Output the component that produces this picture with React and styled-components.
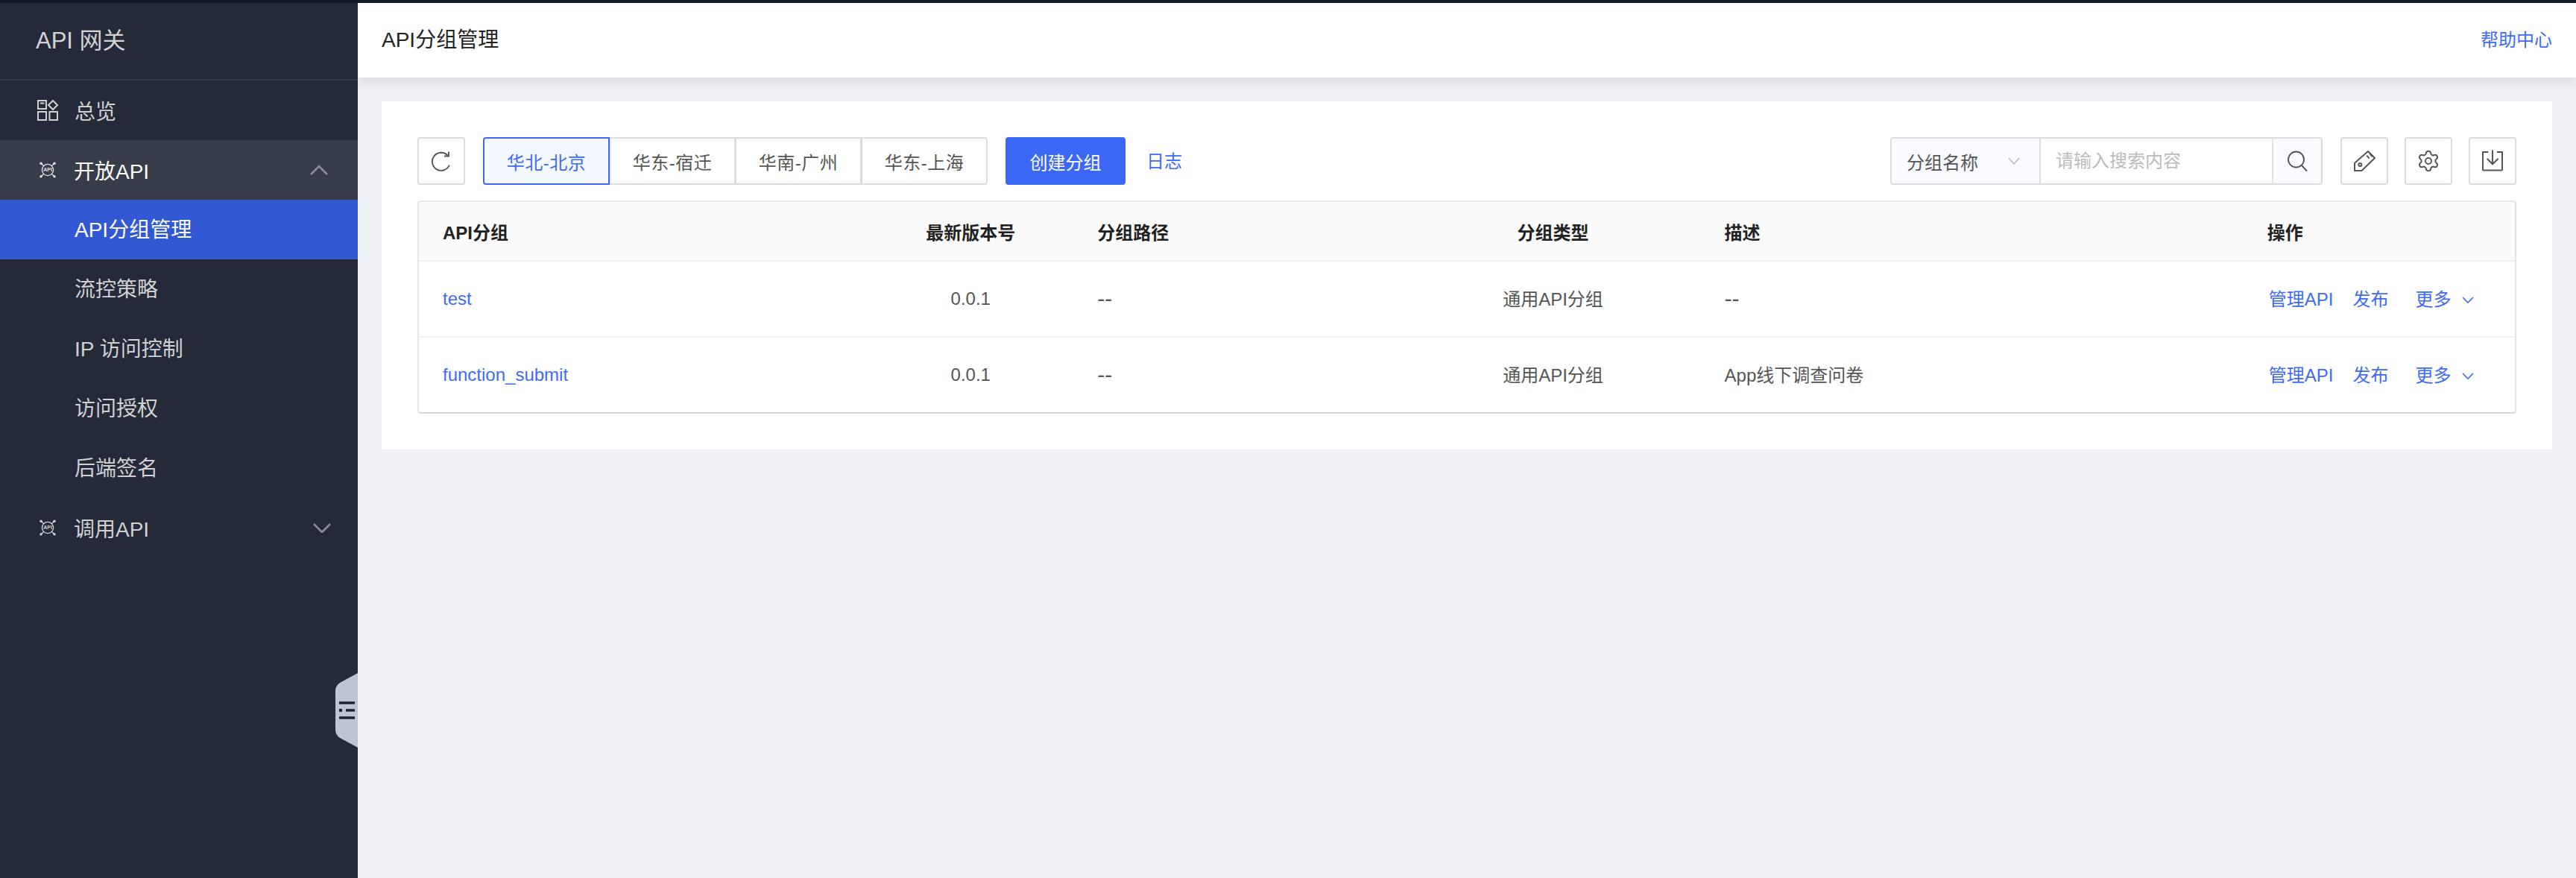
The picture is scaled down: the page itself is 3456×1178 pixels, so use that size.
import React from "react";
import styled, { createGlobalStyle } from "styled-components";
import { Settings } from "lucide-react";

const Global = createGlobalStyle`
  html, body { margin: 0; padding: 0; background: #eff0f4; }
  body { font-family: "Liberation Sans", "Noto Sans CJK SC", sans-serif; }
  * { box-sizing: border-box; }
`;

const Page = styled.div`
  width: 3456px;
  height: 1178px;
  display: flex;
  flex-direction: column;
  overflow: hidden;
`;
const TopStrip = styled.div`
  height: 4px;
  flex: none;
  background: #141b2b;
`;
const Body = styled.div`
  flex: 1;
  display: flex;
  min-height: 0;
`;
const Sidebar = styled.aside`
  width: 480px;
  flex: none;
  position: relative;
  background: #242a38;
`;
const Brand = styled.div`
  height: 104px;
  padding: 0 0 8px 48px;
  display: flex;
  align-items: center;
  font-size: 31px;
  color: #d3d4d7;
  border-bottom: 2px solid #363b48;
`;
const NavItem = styled.div`
  height: 80px;
  display: flex;
  align-items: center;
  padding-left: ${(p) => (p.$sub ? "100px" : "50px")};
  padding-bottom: ${(p) => (p.$sub ? "4px" : "0")};
  font-size: 28px;
  color: ${(p) => (p.$active || p.$open ? "#ffffff" : "#d0d1d5")};
  background: ${(p) => (p.$active ? "#3358d4" : p.$open ? "#373c49" : "transparent")};
`;
const NavIconSlot = styled.span`
  width: 50px;
  flex: none;
  display: flex;
  align-items: center;
`;
const NavLabel = styled.span`
  flex: 1;
  margin-left: ${(p) => p.$shift || 0}px;
`;
const NavChevron = styled.svg`
  width: 24px;
  height: 14px;
  margin-right: ${(p) => p.$inset}px;
  fill: none;
  stroke: #8b8e98;
  stroke-width: 2.6;
`;
const Handle = styled.div`
  position: absolute;
  right: 0;
  top: 899px;
  width: 30px;
  height: 100px;
`;
const Main = styled.main`
  flex: 1;
  min-width: 0;
  display: flex;
  flex-direction: column;
`;
const Header = styled.header`
  height: 100px;
  flex: none;
  display: flex;
  align-items: center;
  justify-content: space-between;
  padding: 0 32px 6px;
  background: #fff;
  box-shadow: 0 4px 16px rgba(0, 0, 0, 0.1);
`;
const Title = styled.div`
  font-size: 28px;
  color: #222;
`;
const HelpLink = styled.a`
  font-size: 24px;
  color: #3d6bf5;
`;
const Content = styled.div`
  padding: 32px;
`;
const Card = styled.section`
  background: #fff;
  padding: 48px;
`;
const Toolbar = styled.div`
  display: flex;
  align-items: center;
  height: 64px;
  margin-bottom: 21px;
`;
const IconButton = styled.button`
  width: 64px;
  height: 64px;
  padding: 0;
  margin-left: ${(p) => p.$gap || 0}px;
  display: flex;
  align-items: center;
  justify-content: center;
  background: #fff;
  border: 2px solid #dcdcdc;
  border-radius: 4px;
  color: #555;
`;
const Regions = styled.div`
  display: flex;
  margin-left: 24px;
`;
const RegionTab = styled.button`
  width: 170px;
  height: 64px;
  margin-left: ${(p) => (p.$first ? 0 : "-1px")};
  padding: 0;
  position: ${(p) => (p.$active ? "relative" : "static")};
  font: inherit;
  font-size: 24px;
  letter-spacing: 0.5px;
  color: ${(p) => (p.$active ? "#3d6bf5" : "#555")};
  background: ${(p) => (p.$active ? "#f3f7ff" : "#fff")};
  border: 2px solid ${(p) => (p.$active ? "#3d6bf5" : "#dcdcdc")};
  border-radius: ${(p) => (p.$first ? "4px 0 0 4px" : p.$last ? "0 4px 4px 0" : "0")};
`;
const PrimaryButton = styled.button`
  width: 161px;
  height: 64px;
  margin-left: 24px;
  padding: 0;
  font: inherit;
  font-size: 24px;
  color: #fff;
  background: #3c68f8;
  border: 0;
  border-radius: 4px;
`;
const LogLink = styled.a`
  margin-left: 28px;
  margin-top: -4px;
  font-size: 24px;
  color: #3d6bf5;
`;
const Spacer = styled.div`
  flex: 1;
`;
const SearchGroup = styled.div`
  width: 580px;
  height: 64px;
  display: flex;
  border: 2px solid #dcdcdc;
  border-radius: 4px;
  overflow: hidden;
`;
const SearchSelect = styled.div`
  width: 200px;
  flex: none;
  display: flex;
  align-items: center;
  justify-content: space-between;
  padding: 0 26px 0 20px;
  font-size: 24px;
  color: #555;
  background: #fafbff;
  border-right: 2px solid #dcdcdc;
`;
const SearchInput = styled.input`
  flex: 1;
  min-width: 0;
  padding: 0 20px;
  border: 0;
  outline: 0;
  font: inherit;
  font-size: 24px;
  background: #fff;
  &::placeholder { color: #bbb; }
`;
const SearchButton = styled.div`
  width: 66px;
  flex: none;
  display: flex;
  align-items: center;
  justify-content: center;
  background: #fafbff;
  border-left: 2px solid #e4e4e4;
  color: #555;
`;
const Chevron = styled.svg`
  width: 16px;
  height: 10px;
  margin-top: ${(p) => p.$drop || 0}px;
  fill: none;
  stroke: ${(p) => p.$color || "currentColor"};
  stroke-width: 1.6;
  flex: none;
`;
const TableFrame = styled.div`
  border: 2px solid #e6e6e6;
  border-bottom-color: #d8d8d8;
  border-right-color: #e2e2e2;
  border-radius: 4px;
  overflow: hidden;
`;
const Table = styled.table`
  width: 100%;
  table-layout: fixed;
  border-collapse: separate;
  border-spacing: 0;
`;
const Th = styled.th`
  height: 80px;
  padding: 0 32px;
  font-size: 24px;
  font-weight: 700;
  color: #222;
  text-align: ${(p) => (p.$center ? "center" : "left")};
  background: #fafafa;
  border-bottom: 2px solid #f0f0f0;
`;
const Td = styled.td`
  height: ${(p) => (p.$last ? "100px" : "102px")};
  padding: 0 32px ${(p) => (p.$lift ? "4px" : "0")};
  font-size: 24px;
  color: #555;
  text-align: ${(p) => (p.$center ? "center" : "left")};
  border-bottom: ${(p) => (p.$last ? "0" : "2px solid #f0f0f0")};
`;
const Dash = styled.span`
  font-size: 30px;
  line-height: 1;
`;
const TextLink = styled.a`
  color: #3d6bf5;
`;
const Actions = styled.div`
  display: flex;
  align-items: center;
  margin-left: 2px;
  color: #3d6bf5;
`;
const ActionPublish = styled.a`
  margin-left: 26px;
`;
const ActionMore = styled.a`
  margin-left: 36px;
  margin-right: 14px;
`;
const GearGlyph = styled(Settings)`
  width: 32px;
  height: 32px;
  stroke: #555;
  stroke-width: 1.5;
`;

const OverviewIcon = () => (
  <svg width="30" height="30" viewBox="0 0 30 30" fill="none" stroke="#d0d1d4" strokeWidth="2">
    <rect x="1" y="2" width="11" height="11" />
    <path d="M4 5.5h5.5" />
    <path d="M21 2l6 6-6 6-6-6z" />
    <rect x="1" y="17" width="11" height="11" />
    <rect x="16.5" y="17" width="10.5" height="11" />
  </svg>
);

const ApiIcon = ({ color }) => (
  <svg width="28" height="24" viewBox="-2 0 28 24" fill="none" stroke={color} strokeWidth="1.4">
    <circle cx="12" cy="12" r="7.6" />
    <path d="M3.5 3.5l3.5 3.5M20.5 3.5l-3.5 3.5M3.5 20.5l3.5-3.5M20.5 20.5l-3.5-3.5" />
    <circle cx="3" cy="3.2" r="1.7" fill={color} stroke="none" />
    <circle cx="21" cy="3.2" r="1.7" fill={color} stroke="none" />
    <circle cx="3" cy="20.8" r="1.7" fill={color} stroke="none" />
    <circle cx="21" cy="20.8" r="1.7" fill={color} stroke="none" />
    <text x="12" y="14.4" textAnchor="middle" fontSize="7" fontWeight="700" fill={color} stroke="none" fontFamily="Liberation Sans">API</text>
  </svg>
);

const RefreshIcon = () => (
  <svg width="28" height="28" viewBox="0 0 28 28" fill="none" stroke="#555" strokeWidth="1.9">
    <path d="M22.6 6.6A12 12 0 1 0 24.9 19.5" />
    <path d="M24 1.5v6h-6" />
  </svg>
);

const SearchIcon = () => (
  <svg width="30" height="30" viewBox="0 0 30 30" fill="none" stroke="#555" strokeWidth="1.9">
    <circle cx="13.5" cy="13" r="10.5" />
    <path d="M21 21l7 7.5" />
  </svg>
);

const TagIcon = () => (
  <svg width="30" height="30" viewBox="0 0 30 30" fill="none" stroke="#555" strokeWidth="2" strokeLinejoin="round">
    <path d="M2 28V17.7L20 2l9 9-17.5 17z" />
    <circle cx="9.3" cy="20" r="2" />
    <path d="M18.3 7.7l3.4 4M22.3 5l3.4 4.3" />
  </svg>
);

const ImportIcon = () => (
  <svg width="30" height="30" viewBox="0 0 30 30" fill="none" stroke="#555" strokeWidth="2">
    <path d="M9.3 3H2v23.5a1 1 0 0 0 1 1h24a1 1 0 0 0 1-1V3h-7" />
    <path d="M15 0.5v18.5M7.7 11.7l7.3 7.6 7.7-7.6" />
  </svg>
);

const HandleShape = () => (
  <svg width="30" height="100" viewBox="0 0 30 100">
    <path d="M30 0L6 13Q0 17 0 24V76Q0 83 6 87L30 100z" fill="#bfc4d4" />
    <path d="M5 40h21M5 60h21M14 50h12" stroke="#1d2333" strokeWidth="3.5" fill="none" />
    <rect x="5" y="48" width="4" height="4" fill="#1d2333" />
  </svg>
);

const regions = ["华北-北京", "华东-宿迁", "华南-广州", "华东-上海"];
const columns = [
  { w: 602, label: "API分组" },
  { w: 276, label: "最新版本号", center: true },
  { w: 445, label: "分组路径" },
  { w: 396, label: "分组类型", center: true },
  { w: 728, label: "描述" },
  { w: 364, label: "操作" },
];
const rows = [
  { name: "test", desc: <Dash>--</Dash> },
  { name: "function_submit", desc: "App线下调查问卷" },
];
const subItems = ["API分组管理", "流控策略", "IP 访问控制", "访问授权", "后端签名"];

export default function App() {
  return (
    <Page>
      <Global />
      <TopStrip />
      <Body>
        <Sidebar>
          <Brand>API 网关</Brand>
          <NavItem>
            <NavIconSlot><OverviewIcon /></NavIconSlot>
            <NavLabel>总览</NavLabel>
          </NavItem>
          <NavItem $open>
            <NavIconSlot><ApiIcon color="#e0e1e4" /></NavIconSlot>
            <NavLabel $shift={-1}>开放API</NavLabel>
            <NavChevron $inset={40} viewBox="0 0 24 14"><path d="M1 13L12 2l11 11" /></NavChevron>
          </NavItem>
          {subItems.map((s, i) => (
            <NavItem key={s} $sub $active={i === 0}>{s}</NavItem>
          ))}
          <NavItem>
            <NavIconSlot><ApiIcon color="#cfd0d4" /></NavIconSlot>
            <NavLabel $shift={-1}>调用API</NavLabel>
            <NavChevron $inset={36} viewBox="0 0 24 14"><path d="M1 2l11 11L23 2" /></NavChevron>
          </NavItem>
          <Handle><HandleShape /></Handle>
        </Sidebar>
        <Main>
          <Header>
            <Title>API分组管理</Title>
            <HelpLink>帮助中心</HelpLink>
          </Header>
          <Content>
            <Card>
              <Toolbar>
                <IconButton><RefreshIcon /></IconButton>
                <Regions>
                  {regions.map((r, i) => (
                    <RegionTab key={r} $active={i === 0} $first={i === 0} $last={i === regions.length - 1}>{r}</RegionTab>
                  ))}
                </Regions>
                <PrimaryButton>创建分组</PrimaryButton>
                <LogLink>日志</LogLink>
                <Spacer />
                <SearchGroup>
                  <SearchSelect>
                    分组名称
                    <Chevron $color="#bbb" viewBox="0 0 16 10"><path d="M1 1l7 8 7-8" /></Chevron>
                  </SearchSelect>
                  <SearchInput placeholder="请输入搜索内容" />
                  <SearchButton><SearchIcon /></SearchButton>
                </SearchGroup>
                <IconButton $gap={24}><TagIcon /></IconButton>
                <IconButton $gap={22}><GearGlyph /></IconButton>
                <IconButton $gap={22}><ImportIcon /></IconButton>
              </Toolbar>
              <TableFrame>
                <Table>
                  <colgroup>
                    {columns.map((c) => <col key={c.label} width={c.w} />)}
                  </colgroup>
                  <thead>
                    <tr>
                      {columns.map((c) => <Th key={c.label} $center={c.center}>{c.label}</Th>)}
                    </tr>
                  </thead>
                  <tbody>
                    {rows.map((r, i) => {
                      const last = i === rows.length - 1;
                      return (
                        <tr key={r.name}>
                          <Td $last={last}><TextLink>{r.name}</TextLink></Td>
                          <Td $last={last} $center>0.0.1</Td>
                          <Td $last={last}><Dash>--</Dash></Td>
                          <Td $last={last} $center $lift>通用API分组</Td>
                          <Td $last={last} $lift={i === 1}>{r.desc}</Td>
                          <Td $last={last} $lift>
                            <Actions>
                              <a>管理API</a>
                              <ActionPublish>发布</ActionPublish>
                              <ActionMore>更多</ActionMore>
                              <Chevron $drop={8} viewBox="0 0 16 10"><path d="M1 1l7 7 7-7" /></Chevron>
                            </Actions>
                          </Td>
                        </tr>
                      );
                    })}
                  </tbody>
                </Table>
              </TableFrame>
            </Card>
          </Content>
        </Main>
      </Body>
    </Page>
  );
}
